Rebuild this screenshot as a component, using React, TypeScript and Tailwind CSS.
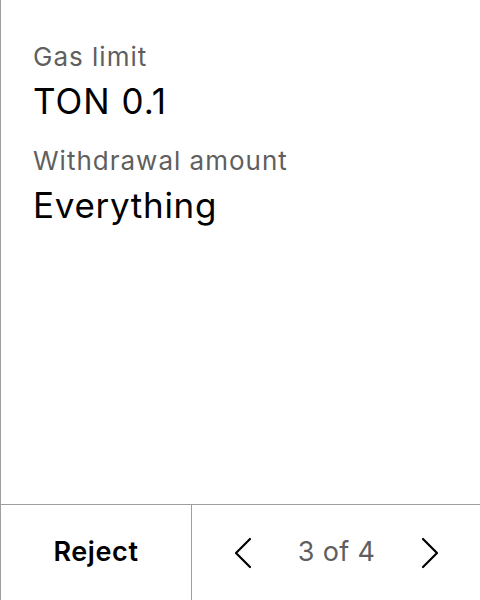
import React from "react";

const ChevronLeft = () => (
  <svg width="20" height="32" viewBox="0 0 20 32" fill="none">
    <path d="M17 2 L3 16 L17 30" stroke="black" strokeWidth="2.2" strokeLinecap="round" strokeLinejoin="round" />
  </svg>
);

const ChevronRight = () => (
  <svg width="20" height="32" viewBox="0 0 20 32" fill="none">
    <path d="M3 2 L17 16 L3 30" stroke="black" strokeWidth="2.2" strokeLinecap="round" strokeLinejoin="round" />
  </svg>
);

export default function App() {
  return (
    <div className="w-[480px] h-[600px] bg-white border-l border-[#9e9e9e] flex flex-col" style={{ fontFamily: "Inter, 'Noto Sans', sans-serif" }}>
      <div className="flex-1 px-8 pt-[37px] flex flex-col">
        <div className="text-[26px] leading-[40px] tracking-[1px] text-[#5f5f5f]">Gas limit</div>
        <div className="text-[35px] leading-[48px] tracking-[1px] text-black">TON 0.1</div>
        <div className="mt-4 text-[26px] leading-[40px] tracking-[1px] text-[#5f5f5f]">Withdrawal amount</div>
        <div className="text-[35px] leading-[48px] tracking-[0.7px] text-black">Everything</div>
      </div>
      <div className="h-[96px] border-t border-[#9e9e9e] flex">
        <button className="w-[191px] border-r border-[#9e9e9e] flex items-center justify-center text-[27px] tracking-[0.6px] font-semibold text-black">
          Reject
        </button>
        <div className="flex-1 flex items-center justify-between pl-[41px] pr-[40px]">
          <ChevronLeft />
          <span className="text-[27px] tracking-[0.3px] text-[#5f5f5f]">3 of 4</span>
          <ChevronRight />
        </div>
      </div>
    </div>
  );
}
